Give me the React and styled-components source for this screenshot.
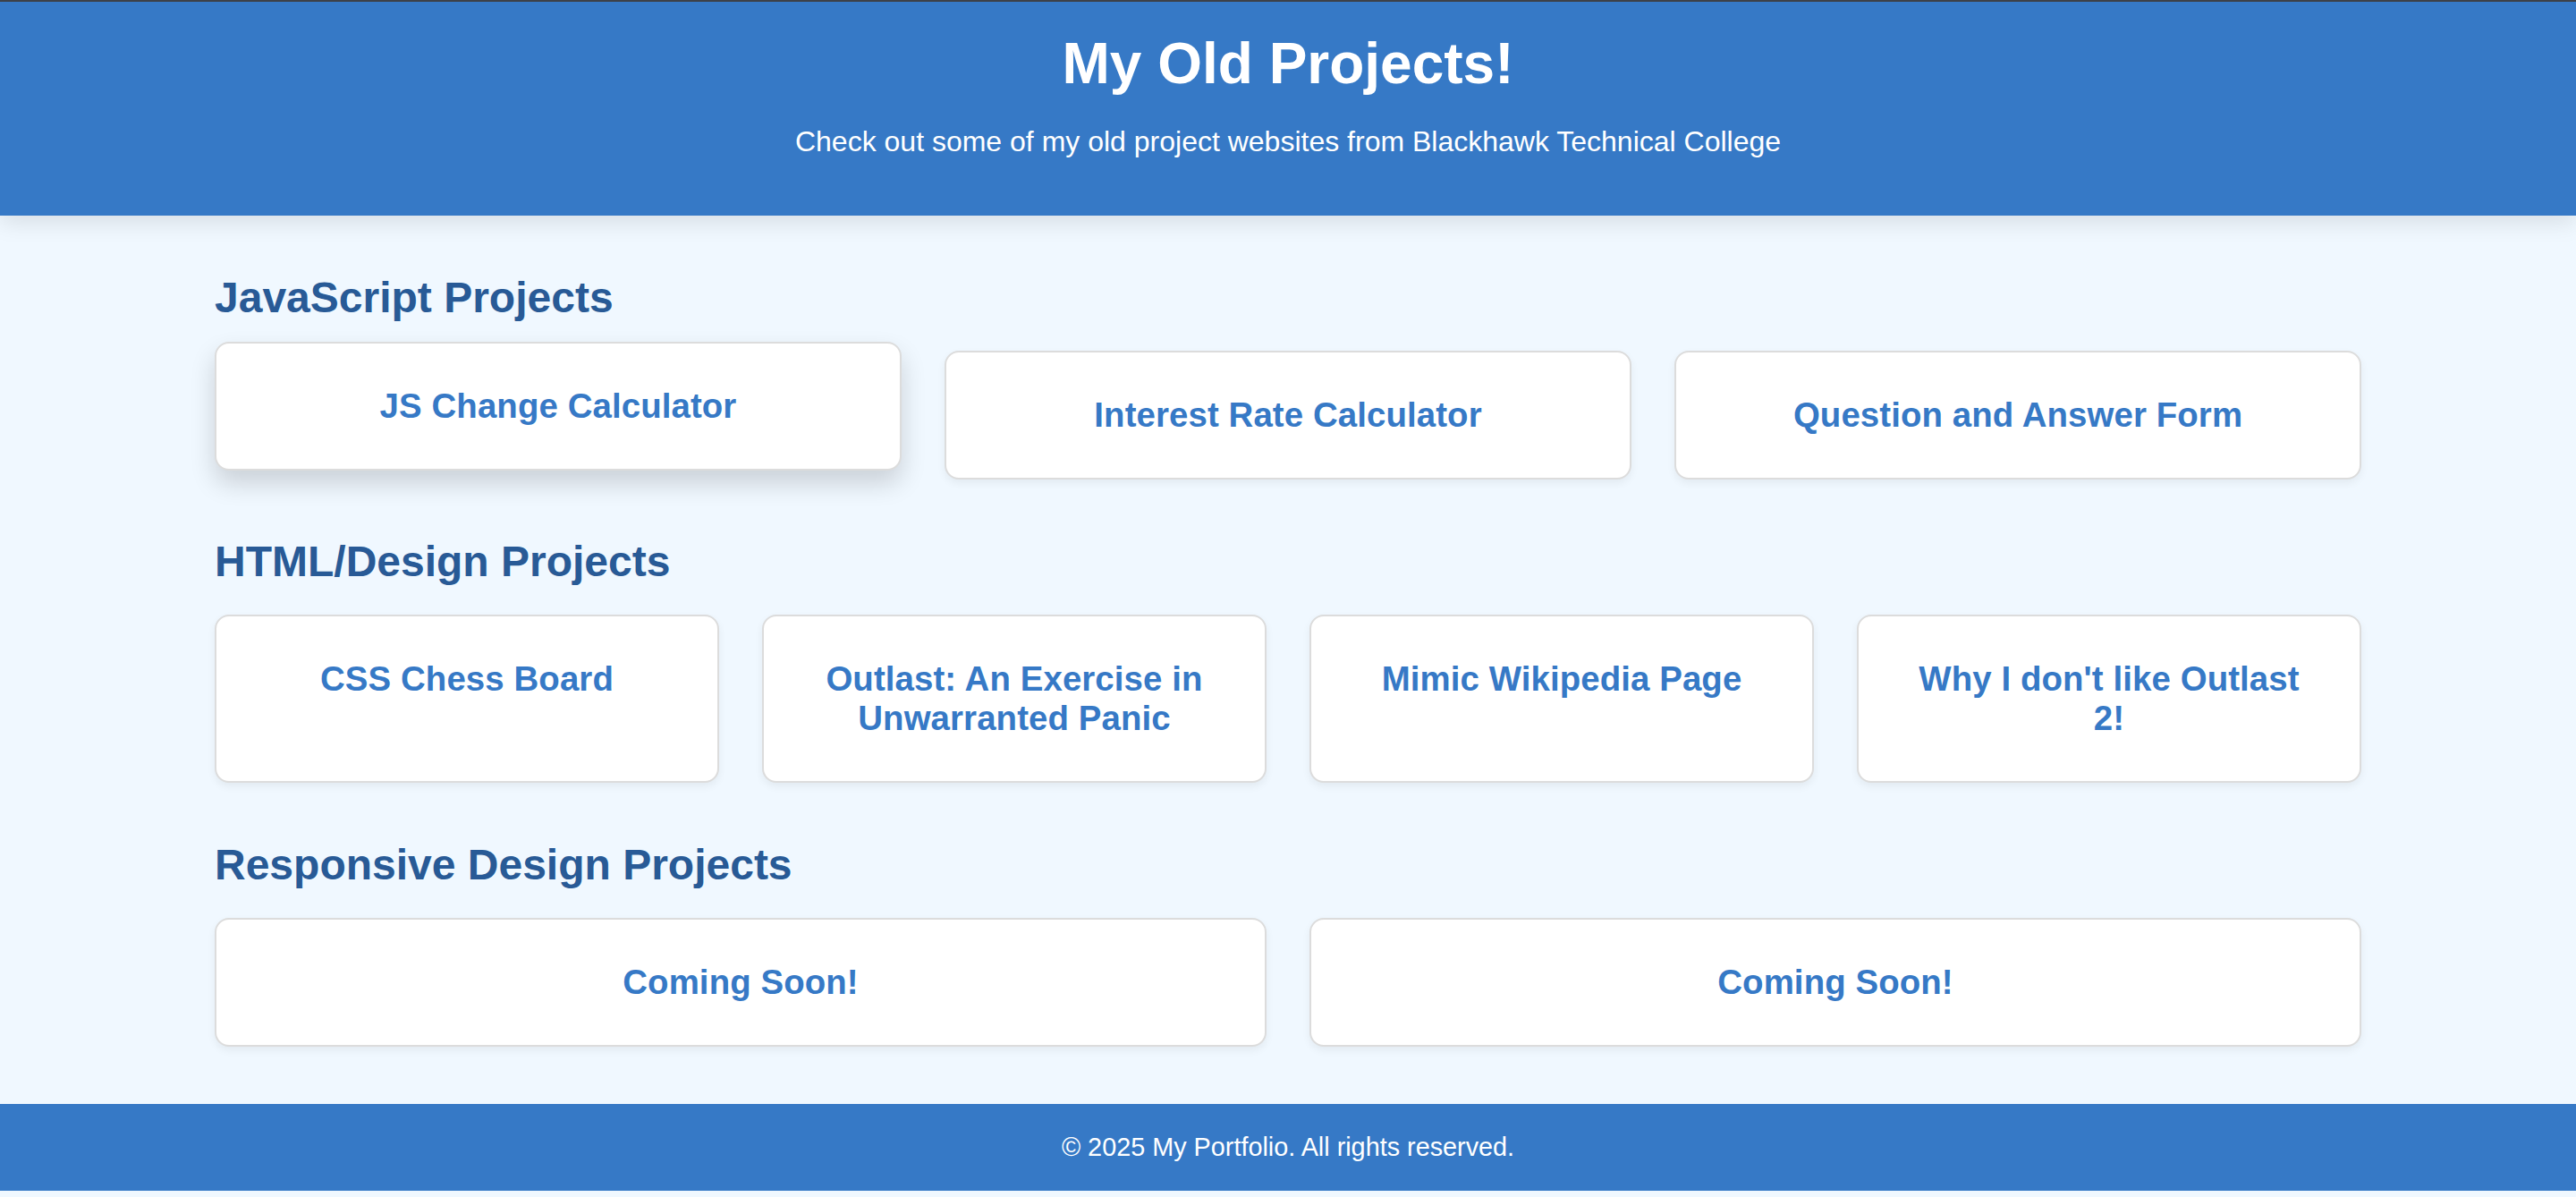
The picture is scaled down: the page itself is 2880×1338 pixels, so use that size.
import styled, { createGlobalStyle } from "styled-components";

const GlobalStyle = createGlobalStyle`
  html, body {
    margin: 0;
    padding: 0;
    background: #f0f8ff;
    font-family: "Liberation Sans", Arial, Helvetica, sans-serif;
  }
`;

const Header = styled.header`
  background: #3679c6;
  color: #ffffff;
  text-align: center;
  padding: 32px;
  border-top: 2px solid #3d4148;
  box-shadow: 0 8px 24px rgba(0, 0, 0, 0.1);
  position: relative;
  z-index: 1;
`;

const Title = styled.h1`
  font-size: 64px;
  font-weight: bold;
  margin: 0;
`;

const Subtitle = styled.p`
  font-size: 32px;
  margin: 32px 0;
`;

const Main = styled.main`
  max-width: 2400px;
  margin: 0 auto;
  padding: 64px 0;
`;

const Section = styled.section`
  margin-bottom: 64px;

  &:last-child {
    margin-bottom: 0;
  }
`;

const SectionTitle = styled.h2`
  font-size: 48px;
  font-weight: bold;
  color: #285a96;
  margin: 0 0 32px;
`;

const Grid = styled.div`
  display: grid;
  grid-template-columns: repeat(auto-fit, minmax(500px, 1fr));
  gap: 48px;
`;

const Card = styled.a`
  display: block;
  background: #ffffff;
  border: 2px solid #dcdcdc;
  border-radius: 16px;
  padding: 48px;
  text-align: center;
  text-decoration: none;
  box-shadow: ${(p) =>
    p.$hover ? "0 14px 28px rgba(0, 0, 0, 0.16)" : "0 4px 10px rgba(0, 0, 0, 0.06)"};
  transform: ${(p) => (p.$hover ? "translateY(-10px)" : "none")};
`;

const CardTitle = styled.h3`
  font-size: 38.4px;
  font-weight: bold;
  letter-spacing: 0.1px;
  color: #3679c6;
  margin: 0;
`;

const Footer = styled.footer`
  background: #3679c6;
  color: #ffffff;
  text-align: center;
  padding: 32px;
  font-size: 28.8px;
`;

const sections = [
  {
    title: "JavaScript Projects",
    items: ["JS Change Calculator", "Interest Rate Calculator", "Question and Answer Form"],
  },
  {
    title: "HTML/Design Projects",
    items: [
      "CSS Chess Board",
      "Outlast: An Exercise in Unwarranted Panic",
      "Mimic Wikipedia Page",
      "Why I don't like Outlast 2!",
    ],
  },
  {
    title: "Responsive Design Projects",
    items: ["Coming Soon!", "Coming Soon!"],
  },
];

const App = () => {
  return (
    <>
      <GlobalStyle />
      <Header>
        <Title>My Old Projects!</Title>
        <Subtitle>Check out some of my old project websites from Blackhawk Technical College</Subtitle>
      </Header>

      <Main>
        {sections.map((section, si) => (
          <Section key={section.title}>
            <SectionTitle>{section.title}</SectionTitle>
            <Grid>
              {section.items.map((item, i) => (
                <Card key={i} href="#" $hover={si === 0 && i === 0}>
                  <CardTitle>{item}</CardTitle>
                </Card>
              ))}
            </Grid>
          </Section>
        ))}
      </Main>

      <Footer>© 2025 My Portfolio. All rights reserved.</Footer>
    </>
  );
};

export default App;
